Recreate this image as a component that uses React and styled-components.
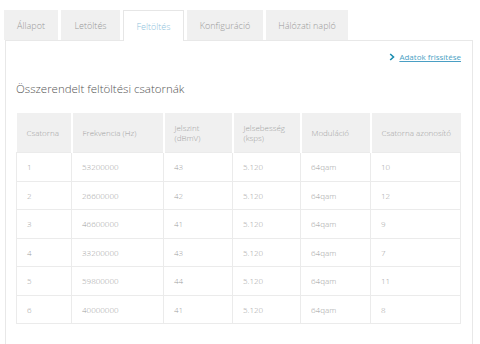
import React from 'react'
import styled, { createGlobalStyle } from 'styled-components'

const GlobalStyle = createGlobalStyle`
    html, body {
        margin: 0;
        padding: 0;
        background: #fff;
        font-family: "Open Sans", "Liberation Sans", sans-serif;
        font-weight: 300;
    }
`

const StyledPage = styled.div`
    width: 480px;
    height: 344px;
    overflow: hidden;
    padding: 10px 0 0 4px;
    box-sizing: border-box;
`

const StyledTabs = styled.div`
    display: flex;
    gap: 3px;
    height: 30px;
    position: relative;
    z-index: 1;
`

const StyledTab = styled.div`
    width: ${p => p.$w}px;
    box-sizing: border-box;
    display: flex;
    align-items: center;
    justify-content: center;
    font-size: 9px;
    color: ${p => (p.$active ? '#8fc3dc' : '#999')};
    background: ${p => (p.$active ? '#fff' : '#f0f0f0')};
    border: 1px solid ${p => (p.$active ? '#e6e6e6' : '#f0f0f0')};
    border-bottom: none;
    height: ${p => (p.$active ? '31px' : '30px')};
`

const StyledPanel = styled.div`
    margin-left: 1px;
    width: 468px;
    height: 310px;
    box-sizing: border-box;
    border: 1px solid #e8e8e8;
    padding: 10px 11px 0 10px;
    display: flex;
    flex-direction: column;
`

const StyledRefresh = styled.a`
    align-self: flex-end;
    display: flex;
    align-items: center;
    gap: 4px;
    font-size: 8px;
    line-height: 12px;
    font-weight: 400;
    color: #4a9fc4;
    text-decoration: underline;
    cursor: pointer;
`

const StyledHeading = styled.h2`
    margin: 19px 0 0 0;
    font-size: 11.5px;
    line-height: 14px;
    font-weight: 300;
    color: #555;
`

const StyledTable = styled.table`
    margin-top: 17px;
    width: 444px;
    border-collapse: collapse;
    table-layout: fixed;
    font-size: 8px;
    color: #a0a0a0;
`

const StyledTh = styled.th`
    background: #f0f0f0;
    height: 39px;
    padding: 0 4px 0 10px;
    text-align: left;
    font-weight: 300;
    line-height: 10px;
    white-space: nowrap;
    border-style: solid;
    border-color: #fff;
    border-width: 0 2px;
    &:first-child { border-left: none; }
    &:last-child { border-right: none; }
`

const StyledTd = styled.td`
    height: 27.5px;
    padding: 0 10px;
    border: 1px solid #ebebeb;
`

const columns = [
    { label: 'Csatorna', w: 55 },
    { label: 'Frekvencia (Hz)', w: 92 },
    { label: ['Jelszint', '(dBmV)'], w: 69 },
    { label: ['Jelsebesség', '(ksps)'], w: 68 },
    { label: 'Moduláció', w: 70 },
    { label: 'Csatorna azonosító', w: 90 }
]

const rows = [
    ['1', '53200000', '43', '5.120', '64qam', '10'],
    ['2', '26600000', '42', '5.120', '64qam', '12'],
    ['3', '46600000', '41', '5.120', '64qam', '9'],
    ['4', '33200000', '43', '5.120', '64qam', '7'],
    ['5', '59800000', '44', '5.120', '64qam', '11'],
    ['6', '40000000', '41', '5.120', '64qam', '8']
]

const tabs = [
    { label: 'Állapot', w: 54 },
    { label: 'Letöltés', w: 59 },
    { label: 'Feltöltés', w: 61, active: true },
    { label: 'Konfiguráció', w: 76 },
    { label: 'Hálózati napló', w: 82 }
]

export default function App() {
    return (
        <StyledPage>
            <GlobalStyle />
            <StyledTabs>
                {tabs.map(t => (
                    <StyledTab key={t.label} $w={t.w} $active={t.active}>{t.label}</StyledTab>
                ))}
            </StyledTabs>
            <StyledPanel>
                <StyledRefresh>
                    <svg width="6" height="8" viewBox="0 0 6 8">
                        <path d="M1.2 1 L4.5 4 L1.2 7" fill="none" stroke="#1a8db0" strokeWidth="1.6" />
                    </svg>
                    Adatok frissítése
                </StyledRefresh>
                <StyledHeading>Összerendelt feltöltési csatornák</StyledHeading>
                <StyledTable>
                    <colgroup>
                        {columns.map((c, i) => <col key={i} style={{ width: c.w }} />)}
                    </colgroup>
                    <thead>
                        <tr>
                            {columns.map((c, i) => (
                                <StyledTh key={i}>
                                    {Array.isArray(c.label) ? <>{c.label[0]}<br />{c.label[1]}</> : c.label}
                                </StyledTh>
                            ))}
                        </tr>
                    </thead>
                    <tbody>
                        {rows.map(r => (
                            <tr key={r[0]}>
                                {r.map((v, i) => <StyledTd key={i}>{v}</StyledTd>)}
                            </tr>
                        ))}
                    </tbody>
                </StyledTable>
            </StyledPanel>
        </StyledPage>
    )
}
